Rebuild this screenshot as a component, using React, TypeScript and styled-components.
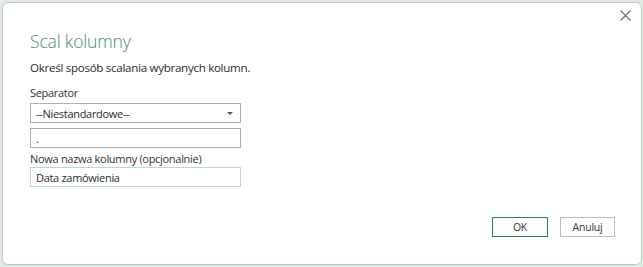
import React from "react";
import styled, { createGlobalStyle } from "styled-components";

const Global = createGlobalStyle`
  html, body { margin: 0; padding: 0; background: #dcece3; }
  body { font-family: "Open Sans", "Noto Sans", sans-serif; }
  * { box-sizing: border-box; }
`;

const Dialog = styled.div`
  position: relative;
  margin: 2px 0 0 2px;
  width: 640px;
  height: 263px;
  background: #ffffff;
  border: 1px solid #c4c4c4;
  border-radius: 6px;
  padding: 26px 0 0 27px;
  display: flex;
  flex-direction: column;
`;

const Close = styled.button`
  position: absolute;
  top: 4px;
  right: 8px;
  width: 16px;
  height: 16px;
  padding: 0;
  border: none;
  background: transparent;
  display: flex;
  align-items: center;
  justify-content: center;
`;

const Title = styled.h1`
  margin: 0;
  font-family: "Open Sans", sans-serif;
  font-weight: 300;
  font-size: 17.6px;
  letter-spacing: -0.2px;
  line-height: 24px;
  color: #4f8a6e;
`;

const Subtitle = styled.p`
  margin: 7px 0 0 0;
  font-size: 11.6px;
  letter-spacing: -0.3px;
  line-height: 16px;
  color: #2b2b2b;
`;

const Label = styled.label<{ $top: number }>`
  display: block;
  margin-top: ${(p) => p.$top}px;
  font-size: 11px;
  letter-spacing: -0.3px;
  line-height: 14px;
  color: #333333;
`;

const Field = styled.div<{ $focused?: boolean; $top: number }>`
  margin-top: ${(p) => p.$top}px;
  width: 211px;
  height: 20px;
  border: 1px solid ${(p) => (p.$focused ? "#b3dbc8" : "#adadad")};
  background: #fff;
  display: flex;
  align-items: center;
  justify-content: space-between;
  padding: 0 7px 0 5px;
  font-size: 11px;
  letter-spacing: -0.3px;
  color: #2b2b2b;
`;

const Caret = styled.span`
  width: 0;
  height: 0;
  border-left: 3px solid transparent;
  border-right: 3px solid transparent;
  border-top: 3px solid #555;
  margin-top: 1px;
`;

const Footer = styled.div`
  margin-top: auto;
  margin-bottom: 27px;
  margin-right: 26px;
  display: flex;
  justify-content: flex-end;
  gap: 12px;
`;

const Button = styled.button<{ $primary?: boolean }>`
  width: ${(p) => (p.$primary ? 56 : 55)}px;
  height: 20px;
  background: #fff;
  border: 1px solid ${(p) => (p.$primary ? "#2f7a58" : "#bcbcbc")};
  font-family: "Open Sans", sans-serif;
  font-size: 10.5px;
  letter-spacing: -0.2px;
  color: #333;
  padding: 0;
`;

export default function App() {
  return (
    <>
      <Global />
      <Dialog>
        <Close aria-label="Zamknij">
          <svg width="11" height="11" viewBox="0 0 11 11">
            <path d="M0.5 0.5 L10.5 10.5 M10.5 0.5 L0.5 10.5" stroke="#6a6a6a" strokeWidth="1.1" />
          </svg>
        </Close>
        <Title>Scal kolumny</Title>
        <Subtitle>Określ sposób scalania wybranych kolumn.</Subtitle>
        <Label $top={10}>Separator</Label>
        <Field $top={3}>
          <span>--Niestandardowe--</span>
          <Caret />
        </Field>
        <Field $top={5}>
          <span>.</span>
        </Field>
        <Label $top={4}>Nowa nazwa kolumny (opcjonalnie)</Label>
        <Field $top={1} $focused>
          <span>Data zamówienia</span>
        </Field>
        <Footer>
          <Button $primary>OK</Button>
          <Button>Anuluj</Button>
        </Footer>
      </Dialog>
    </>
  );
}
